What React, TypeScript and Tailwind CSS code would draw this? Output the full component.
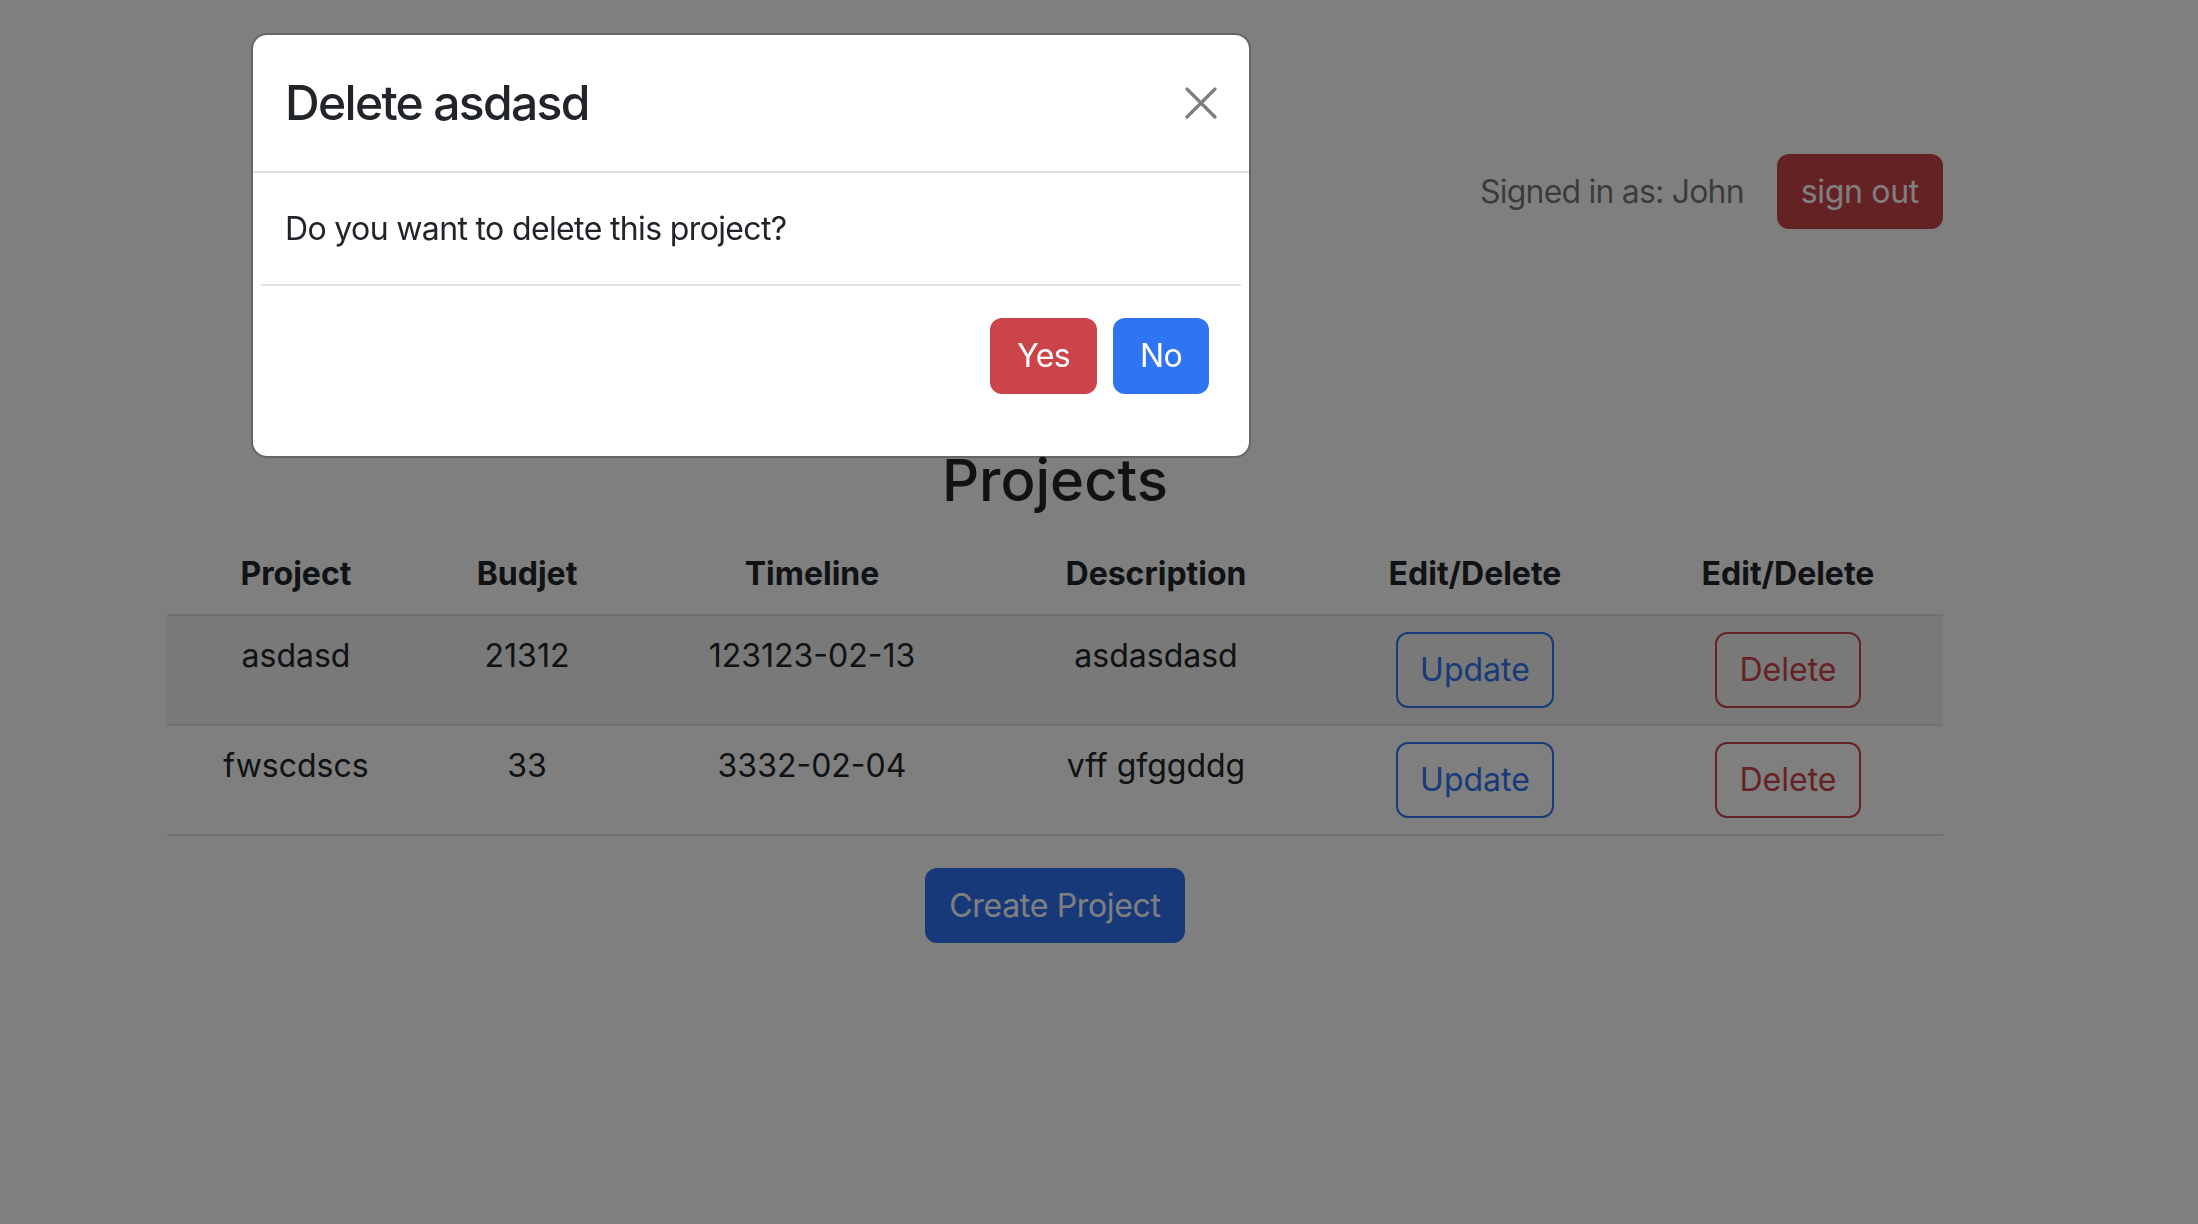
import React from 'react';

const PROJECTS = [
  { name: 'asdasd', budget: '21312', timeline: '123123-02-13', description: 'asdasdasd' },
  { name: 'fwscdscs', budget: '33', timeline: '3332-02-04', description: 'vff gfggddg' },
];

const HEADERS = ['Project', 'Budjet', 'Timeline', 'Description', 'Edit/Delete', 'Edit/Delete'];
const COL_WIDTHS = ['w-[258px]', 'w-[204px]', 'w-[366px]', 'w-[322px]', 'w-[316px]', 'w-[310px]'];

function DeleteModal() {
  return (
    <div className="absolute left-[251px] top-[33px] w-[1000px] rounded-[16px] border-2 border-black/20 bg-white bg-clip-padding text-[#212529]">
      {/* Header */}
      <div className="flex items-center justify-between border-b-2 border-[#dee2e6] px-[32px] py-[32px]">
        <h4 className="text-[48px] font-medium leading-[72px] tracking-[-0.035em]">Delete asdasd</h4>
        <button className="flex h-[32px] w-[32px] items-center justify-center opacity-50">
          <svg viewBox="0 0 16 16" width="32" height="32" fill="none" stroke="#000" strokeWidth="1.6" strokeLinecap="round">
            <path d="M1 1 15 15M15 1 1 15" />
          </svg>
        </button>
      </div>

      {/* Body */}
      <div className="px-[32px] pb-[31px] pt-[32px] text-[32px] leading-[48px] tracking-[-0.02em]">Do you want to delete this project?</div>

      {/* Footer */}
      <div className="mx-[8px] flex justify-end gap-[16px] border-t-2 border-[#dee2e6] pb-[62px] pr-[32px] pt-[32px]">
        <button className="h-[76px] rounded-[12px] bg-[#cb444a] px-[27px] text-[32px] tracking-[-0.02em] text-white">Yes</button>
        <button className="h-[76px] rounded-[12px] bg-[#2f74f2] px-[27px] text-[32px] tracking-[-0.02em] text-white">No</button>
      </div>
    </div>
  );
}

export default function App() {
  return (
    <div className="relative min-h-screen bg-white text-[#212529]" style={{ fontFamily: 'Inter, "Noto Sans", sans-serif' }}>
      {/* Top bar */}
      <div className="ml-[167px] flex w-[1776px] items-center justify-end gap-[33px] pt-[154px]">
        <span className="text-[32px] tracking-[-0.025em] text-black/55">Signed in as: John</span>
        <button className="h-[75px] rounded-[12px] bg-[#cb444a] px-[24px] text-[32px] tracking-[-0.01em] text-white">sign out</button>
      </div>

      <h3 className="mt-[217px] ml-[167px] w-[1776px] text-center text-[58px] font-medium leading-[68px]">Projects</h3>

      <table className="ml-[167px] mt-[20px] w-[1776px] table-fixed border-collapse text-center text-[32px] leading-[48px]">
        <thead>
          <tr className="border-b-2 border-[#dee2e6]">
            {HEADERS.map((h, i) => (
              <th key={i} className={`${COL_WIDTHS[i]} px-[16px] py-[16px] font-bold`}>
                {h}
              </th>
            ))}
          </tr>
        </thead>
        <tbody>
          {PROJECTS.map((p, i) => (
            <tr key={p.name} className={`border-b-2 border-[#dee2e6] align-top ${i === 0 ? 'bg-[#f2f2f2]' : ''}`}>
              <td className="px-[16px] py-[16px]">{p.name}</td>
              <td className="px-[16px] py-[16px]">{p.budget}</td>
              <td className="px-[16px] py-[16px]">{p.timeline}</td>
              <td className="px-[16px] py-[16px]">{p.description}</td>
              <td className="px-[16px] py-[16px]">
                <button className="h-[76px] rounded-[12px] border-2 border-[#2f74f2] px-[22px] text-[#2f74f2]">Update</button>
              </td>
              <td className="px-[16px] py-[16px]">
                <button className="h-[76px] rounded-[12px] border-2 border-[#cb444a] px-[23px] text-[#cb444a]">Delete</button>
              </td>
            </tr>
          ))}
        </tbody>
      </table>

      <div className="ml-[167px] mt-[32px] flex w-[1776px] justify-center">
        <button className="h-[75px] rounded-[12px] bg-[#2f72f3] px-[24px] text-[32px] tracking-[-0.01em] text-white">Create Project</button>
      </div>

      {/* Backdrop */}
      <div className="fixed inset-0 bg-black/50" />

      <DeleteModal />
    </div>
  );
}
